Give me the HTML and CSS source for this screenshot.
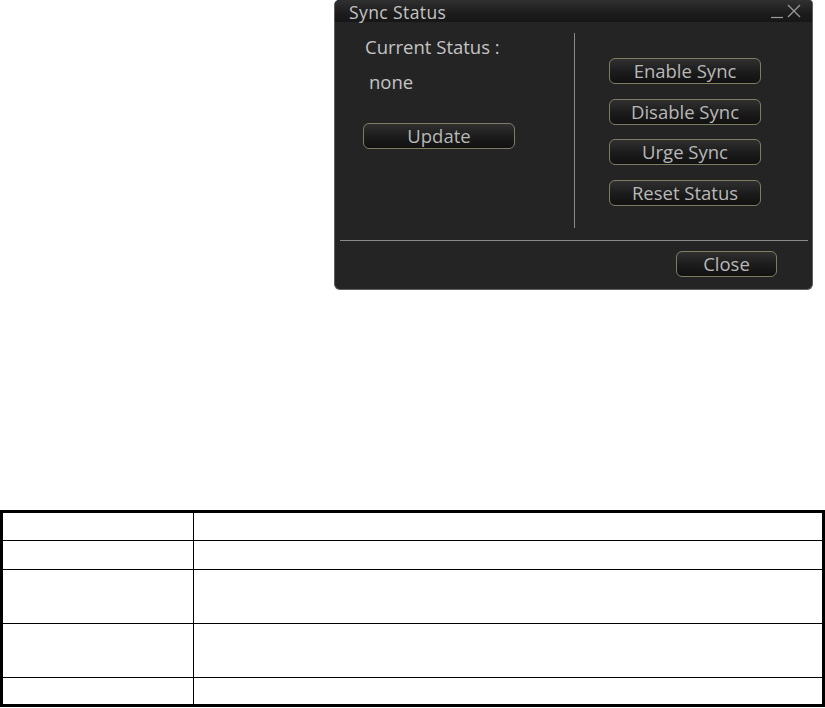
FILE: index.html
```html
<!DOCTYPE html>
<html lang="en">
<head>
    <meta charset="UTF-8">
    <meta name="viewport" content="width=device-width, initial-scale=1.0">
    <title>Sync Status</title>
    <link rel="stylesheet" href="styles.css">
</head>
<body>

    <!-- Sync Status dialog -->
    <div class="dialog-area">
        <div class="dialog">
            <div class="titlebar">
                <span class="title">Sync Status</span>
                <div class="window-controls">
                    <svg width="32" height="20" viewBox="0 0 32 20">
                        <line x1="1" y1="17.5" x2="13" y2="17.5" stroke="#9a9a9a" stroke-width="1.2"/>
                        <line x1="18" y1="5" x2="30" y2="17" stroke="#9a9a9a" stroke-width="1.2"/>
                        <line x1="30" y1="5" x2="18" y2="17" stroke="#9a9a9a" stroke-width="1.2"/>
                    </svg>
                </div>
            </div>

            <div class="dialog-main">
                <div class="status-pane">
                    <p class="status-label">Current Status :</p>
                    <p class="status-value">none</p>
                    <button class="dlg-btn update-btn">Update</button>
                </div>
                <div class="divider"></div>
                <div class="action-pane">
                    <button class="dlg-btn">Enable Sync</button>
                    <button class="dlg-btn">Disable Sync</button>
                    <button class="dlg-btn">Urge Sync</button>
                    <button class="dlg-btn">Reset Status</button>
                </div>
            </div>

            <div class="separator"></div>

            <div class="dialog-footer">
                <button class="dlg-btn close-btn">Close</button>
            </div>
        </div>
    </div>

    <!-- description table -->
    <table class="desc-table">
        <tr class="row-short"><td class="col-name"></td><td></td></tr>
        <tr class="row-short"><td class="col-name"></td><td></td></tr>
        <tr class="row-tall"><td class="col-name"></td><td></td></tr>
        <tr class="row-tall"><td class="col-name"></td><td></td></tr>
        <tr class="row-last"><td class="col-name"></td><td></td></tr>
    </table>

</body>
</html>
```

FILE: styles.css
```css
* {
    margin: 0;
    padding: 0;
    box-sizing: border-box;
}

body {
    background-color: white;
    font-family: "Open Sans", Lato, sans-serif;
    width: 825px;
}

/* dialog position */
.dialog-area {
    padding-left: 334px;
    height: 510px;
}

.dialog {
    width: 479px;
    height: 290px;
    background-color: #242424;
    border: 1px solid #5e5e5e;
    border-top: none;
    border-radius: 5px 4px 6px 6px;
    display: flex;
    flex-direction: column;
    overflow: hidden;
}

/* title bar */
.titlebar {
    height: 22px;
    background: linear-gradient(#303030, #1c1c1c 60%, #161616);
    display: flex;
    justify-content: space-between;
    align-items: flex-start;
    padding-top: 2px;
    padding-left: 14px;
    padding-right: 10px;
}

.title {
    color: #c4c4c4;
    font-size: 17.5px;
    line-height: 20px;
    letter-spacing: 0.4px;
}

.window-controls {
    display: flex;
    margin-top: -2px;
}

/* main area */
.dialog-main {
    height: 218px;
    display: flex;
}

.status-pane {
    width: 239px;
    padding-top: 14px;
    padding-left: 28px;
}

.status-label {
    color: #c4c4c4;
    font-size: 18.5px;
    line-height: 22px;
    padding-left: 2px;
}

.status-value {
    color: #c4c4c4;
    font-size: 18.5px;
    line-height: 22px;
    padding-left: 6px;
    margin-top: 13px;
}

.update-btn {
    margin-top: 30px;
}

.divider {
    width: 1px;
    background-color: #8a8a8a;
    margin-top: 11px;
    margin-bottom: 12px;
}

.action-pane {
    padding-top: 36px;
    padding-left: 34px;
    display: flex;
    flex-direction: column;
    gap: 14.5px;
}

/* buttons */
.dlg-btn {
    width: 152px;
    height: 26px;
    border: 1.5px solid #7f7c64;
    border-radius: 6px;
    background: linear-gradient(#303030, #1b1b1b 55%, #111111);
    color: #b8b8b8;
    font-family: "Open Sans", Lato, sans-serif;
    font-size: 18.5px;
    line-height: 22px;
    display: block;
}

.separator {
    height: 1px;
    background-color: #8a8a8a;
    margin-left: 5px;
    margin-right: 4px;
}

.dialog-footer {
    display: flex;
    justify-content: flex-end;
    padding-top: 10px;
    padding-right: 35px;
}

.close-btn {
    width: 101px;
}

/* description table */
.desc-table {
    width: 825px;
    border-collapse: collapse;
    border: 3px solid black;
}

.desc-table td {
    border: 1px solid black;
}

.desc-table .col-name {
    width: 192px;
}

.row-short td {
    height: 29px;
}

.row-tall td {
    height: 54px;
}

.row-last td {
    height: 28px;
}
```
